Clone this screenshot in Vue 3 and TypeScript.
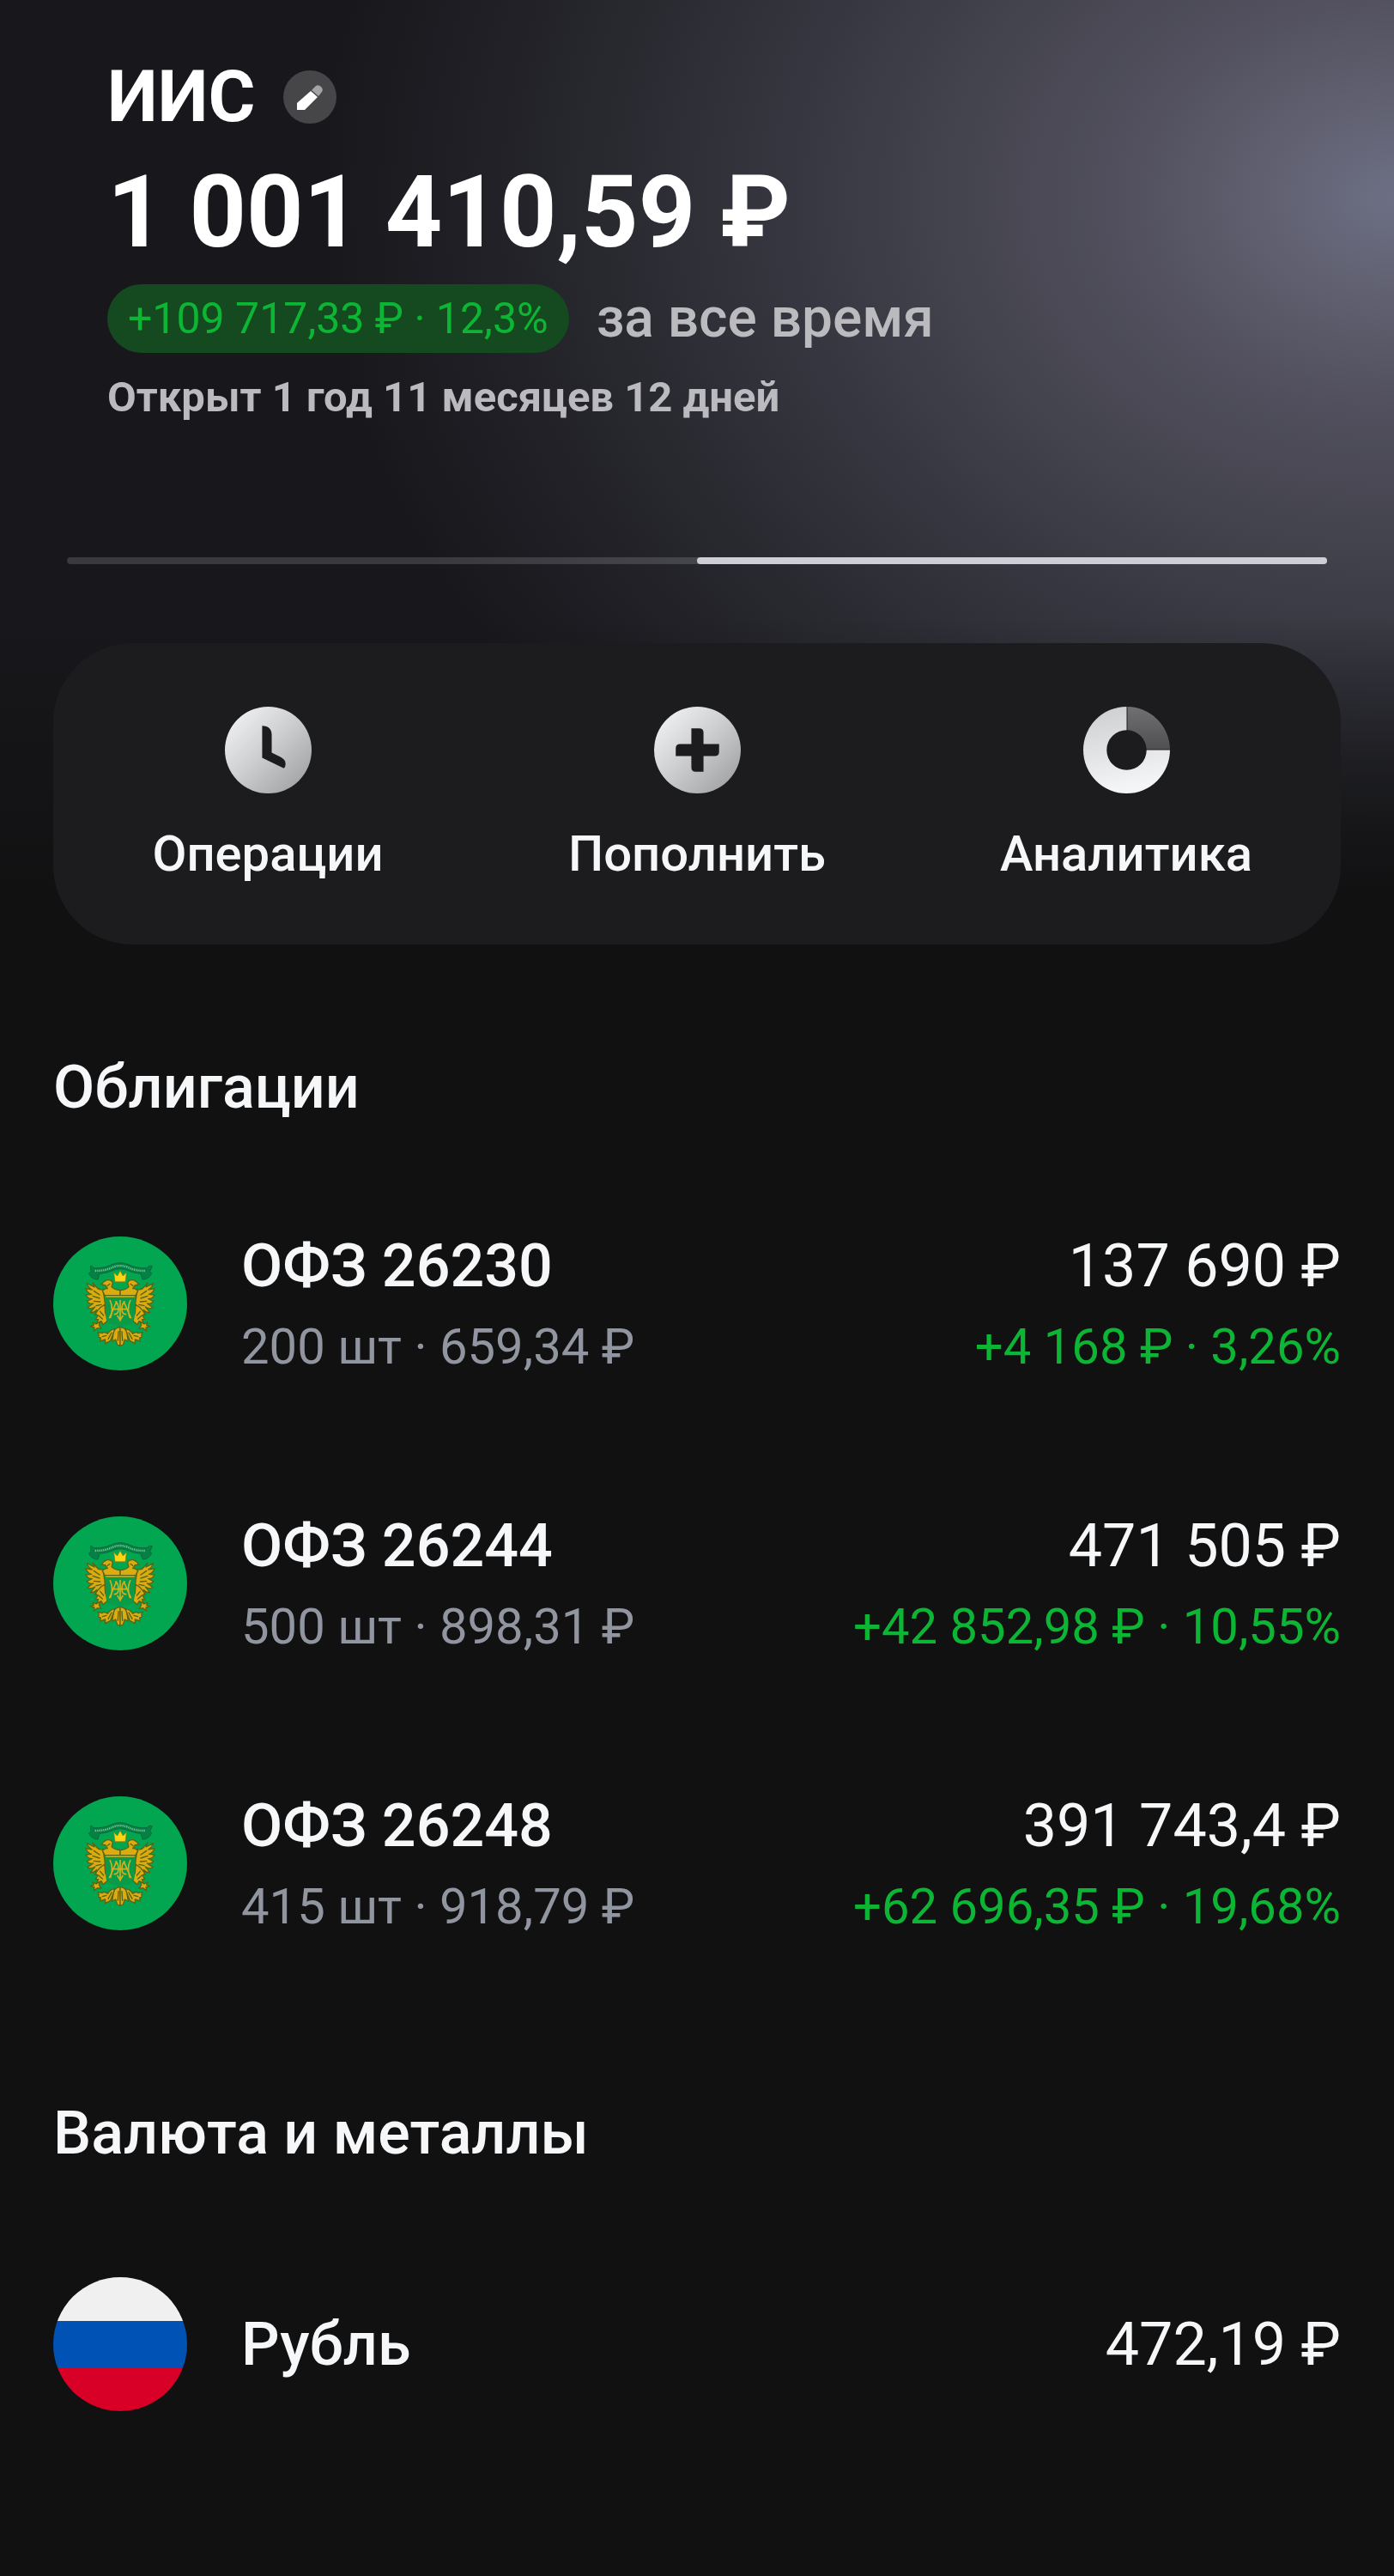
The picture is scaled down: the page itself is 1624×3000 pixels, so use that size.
<script setup lang="ts">
interface Holding {
  id: string
  name: string
  icon: 'emblem' | 'flag'
  amount: string
  details?: string
  profit?: string
}

interface Section {
  title: string
  items: Holding[]
}

const actions = [
  { id: 'history', label: 'Операции' },
  { id: 'deposit', label: 'Пополнить' },
  { id: 'analytics', label: 'Аналитика' },
]

const sections: Section[] = [
  {
    title: 'Облигации',
    items: [
      { id: '26230', name: 'ОФЗ 26230', icon: 'emblem', details: '200 шт · 659,34 ₽', amount: '137 690 ₽', profit: '+4 168 ₽ · 3,26%' },
      { id: '26244', name: 'ОФЗ 26244', icon: 'emblem', details: '500 шт · 898,31 ₽', amount: '471 505 ₽', profit: '+42 852,98 ₽ · 10,55%' },
      { id: '26248', name: 'ОФЗ 26248', icon: 'emblem', details: '415 шт · 918,79 ₽', amount: '391 743,4 ₽', profit: '+62 696,35 ₽ · 19,68%' },
    ],
  },
  {
    title: 'Валюта и металлы',
    items: [{ id: 'rub', name: 'Рубль', icon: 'flag', amount: '472,19 ₽' }],
  },
]
</script>

<template>
  <main class="page">
    <svg class="defs" aria-hidden="true" width="0" height="0">
      <defs>
        <linearGradient id="silver" x1="0.1" y1="0.1" x2="0.9" y2="0.9">
          <stop offset="0" stop-color="#eeeff1" />
          <stop offset="0.5" stop-color="#cbccce" />
          <stop offset="1" stop-color="#a3a3a5" />
        </linearGradient>
        <linearGradient id="ring" x1="0" y1="0" x2="0.2" y2="1">
          <stop offset="0" stop-color="#cbcdce" />
          <stop offset="1" stop-color="#f4f5f6" />
        </linearGradient>
        <linearGradient id="sector" x1="0" y1="0" x2="0" y2="1">
          <stop offset="0" stop-color="#707072" />
          <stop offset="1" stop-color="#505052" />
        </linearGradient>
        <!-- left half of the eagle; the right half is its mirror -->
        <g id="eagle-half">
          <g fill="#dcab10" stroke="#5c6414" stroke-width="4" stroke-linejoin="round">
            <path d="M180 226 L174 184 Q160 190 150 176 L138 162 L144 177 L118 164 Q122 178 136 186 L114 182 Q120 198 134 202 L114 204 Q120 218 136 218 L118 226 Q126 238 140 234 L120 248 Q130 256 146 246 L130 266 Q142 268 152 256 L146 274 Q160 270 164 254 L182 252Z" />
            <path d="M234 206 L180 206 L172 190 Q180 180 190 182 L182 170 L168 168 Q176 156 188 152 Q204 150 208 162 L204 176 Q212 186 234 188Z" />
            <path d="M180 238 Q160 248 148 270 L156 276 L148 290 L158 290 L152 304 L168 296 L174 308 L188 296 Q190 280 182 268Z" />
            <path d="M164 298 L150 306 L138 300 L142 310 L130 314 L144 318 L142 330 L154 320 L168 322 L160 310Z" />
            <path d="M234 316 Q220 318 212 328 L206 366 L218 360 L224 378 L234 382Z" />
            <path d="M216 322 Q198 326 190 340 Q180 330 170 338 L156 334 L160 344 Q154 352 166 354 L164 366 L182 360 L182 374 L200 364 Q208 346 216 322Z" />
          </g>
          <g fill="none" stroke="#4f6418" stroke-width="4" stroke-linecap="round">
            <path d="M142 190 L162 204 M138 208 L162 216 M142 226 L164 228 M150 242 L168 238" />
            <path d="M164 262 L176 276 M158 276 L172 288 M190 172 L198 166" />
            <path d="M228 332 L226 364 M204 336 L192 358 M186 346 L172 350" />
          </g>
        </g>
      </defs>
    </svg>

    <header class="hero">
      <div class="summary">
        <div class="title-row">
          <h1 class="title">ИИС</h1>
          <button class="edit" type="button" aria-label="Изменить название">
            <svg viewBox="0 0 62 62" aria-hidden="true">
              <path d="M16 46 V38 L32 24 L40 31 L25 46Z" fill="#fff" />
              <path d="M33 23 L38 18 Q41 16 44 19 Q47 22 45 25 L41 30Z" fill="#a4a4a6" />
            </svg>
          </button>
        </div>
        <p class="balance">1 001 410,59 ₽</p>
        <div class="profit-row">
          <span class="chip">+109 717,33 ₽ · 12,3%</span>
          <span class="period">за все время</span>
        </div>
        <p class="opened">Открыт 1 год 11 месяцев 12 дней</p>
      </div>
      <div class="pager" aria-hidden="true"><span class="thumb"></span></div>
    </header>

    <nav class="actions" aria-label="Действия со счётом">
      <button v-for="a in actions" :key="a.id" class="action" type="button">
        <svg class="action-icon" viewBox="0 0 100 100" aria-hidden="true">
          <template v-if="a.id === 'history'">
            <circle cx="50" cy="50" r="50" fill="url(#silver)" />
            <path d="M43 22 C50 22 54 26 54 32 V53 L64 58 Q70 61 70 66 Q70 69 68 71 L43 59Z" fill="#1c1c1e" />
          </template>
          <template v-else-if="a.id === 'deposit'">
            <circle cx="50" cy="50" r="50" fill="url(#silver)" />
            <path d="M43 25 H52 Q57 25 57 30 V43 H75 V52 Q75 57 70 57 H57 V75 H48 Q43 75 43 70 V57 H25 V48 Q25 43 30 43 H43Z" fill="#1c1c1e" />
          </template>
          <template v-else>
            <path d="M50 0 A50 50 0 1 0 100 50 H73 A23 23 0 1 1 50 27Z" fill="url(#ring)" />
            <path d="M51 0 A50 50 0 0 1 100 49 H73 A23 23 0 0 0 51 27Z" fill="url(#sector)" />
          </template>
        </svg>
        <span>{{ a.label }}</span>
      </button>
    </nav>

    <section v-for="s in sections" :key="s.title" class="section">
      <h2 class="section-title">{{ s.title }}</h2>
      <ul class="list">
        <li v-for="h in s.items" :key="h.id" class="row">
          <svg v-if="h.icon === 'emblem'" class="avatar" viewBox="0 0 468 468" aria-hidden="true">
            <circle cx="234" cy="234" r="234" fill="#03a650" />
            <path d="M130 104 Q134 98 140 110 Q176 112 200 100 Q234 84 268 100 Q292 112 328 110 Q334 98 346 104 L338 122 L344 130 Q330 152 312 150 L306 130 Q280 128 264 120 Q234 106 204 120 Q188 128 162 130 L156 150 Q138 152 124 130 L132 122Z" fill="#078045" stroke="#056b3c" stroke-width="3" />
            <path d="M146 120 Q184 120 206 108 Q234 96 262 108 Q284 120 322 120" fill="none" stroke="#6fc48d" stroke-width="7" stroke-dasharray="4 3" />
            <use href="#eagle-half" />
            <use href="#eagle-half" transform="translate(468 0) scale(-1 1)" />
            <path d="M212 126 L224 138 L234 120 L244 138 L256 126 L252 158 H216Z" fill="#fbd414" stroke="#8c7d10" stroke-width="2" />
            <path d="M184 208 H284 V282 Q282 304 262 308 Q244 308 234 318 Q224 308 206 308 Q186 304 184 282Z" fill="#0a9a48" />
            <path d="M184 210 H284" stroke="#d9b010" stroke-width="4" />
            <path d="M198 222 Q212 250 200 284 M222 226 L196 286 M216 228 Q228 230 228 254 Q228 272 212 272 M270 222 Q256 250 268 284 M246 226 L272 286 M252 228 Q240 230 240 254 Q240 272 256 272 M234 222 V296 M204 254 H264 M224 276 L234 292 L244 276" fill="none" stroke="#c9b324" stroke-width="5" />
          </svg>
          <svg v-else class="avatar flag" viewBox="0 0 156 156" aria-hidden="true">
            <rect width="156" height="51" fill="#f0f0f0" />
            <rect y="51" width="156" height="55" fill="#0052b4" />
            <rect y="106" width="156" height="50" fill="#d80027" />
          </svg>
          <div class="col">
            <span class="name">{{ h.name }}</span>
            <span v-if="h.details" class="details">{{ h.details }}</span>
          </div>
          <div class="col end">
            <span class="amount">{{ h.amount }}</span>
            <span v-if="h.profit" class="details profit">{{ h.profit }}</span>
          </div>
        </li>
      </ul>
    </section>
  </main>
</template>

<style>
body {
  margin: 0;
  background: #111112;
}
</style>

<style scoped>
.page {
  box-sizing: border-box;
  min-height: 100vh;
  padding: 63px 62px 100px;
  color: #f6f7f8;
  font-family: Roboto, "Noto Sans", sans-serif;
  background:
    linear-gradient(to bottom, transparent 720px, #111112 1040px),
    radial-gradient(1250px 960px at 100% 230px,
      #6d6f84 0%, #606070 12%, #514f5d 26%, #43434d 42%, #35353f 58%, #2a2b31 72%, #1f1f25 87%, #18181c 100%);
}

.defs {
  position: absolute;
}

h1, h2, p, ul {
  margin: 0;
  padding: 0;
}

button {
  padding: 0;
  border: 0;
  font: inherit;
  color: inherit;
  cursor: pointer;
}

.summary {
  padding-left: 63px;
}

.title-row {
  display: flex;
  align-items: center;
  gap: 32px;
}

.title {
  font-size: 84px;
  line-height: 100px;
  font-weight: 700;
  color: #fff;
}

.edit {
  width: 62px;
  height: 62px;
  border-radius: 50%;
  background: #464649;
}

.edit svg {
  display: block;
}

.balance {
  margin-top: 14px;
  font-size: 116px;
  line-height: 140px;
  font-weight: 700;
  color: #fff;
}

.profit-row {
  display: flex;
  align-items: center;
  gap: 32px;
  margin-top: 14px;
}

.chip {
  padding: 0 24px;
  border-radius: 40px;
  background: #154a20;
  color: #0db534;
  font-size: 50px;
  line-height: 80px;
}

.period {
  color: #bababf;
  font-size: 64px;
  line-height: 80px;
  font-weight: 500;
}

.opened {
  margin-top: 24px;
  color: #bababf;
  font-size: 49px;
  line-height: 56px;
  font-weight: 700;
}

.pager {
  display: flex;
  justify-content: flex-end;
  margin: 158px 16px 0;
  border-radius: 4px;
  background: rgba(255, 255, 255, 0.15);
}

.thumb {
  width: 50%;
  height: 8px;
  border-radius: 4px;
  background: #cfced6;
}

.actions {
  display: grid;
  grid-template-columns: repeat(3, 1fr);
  margin-top: 92px;
  padding: 74px 0 70px;
  border-radius: 92px;
  background: #1c1c1e;
}

.action {
  display: flex;
  flex-direction: column;
  align-items: center;
  gap: 34px;
  background: none;
  font-size: 58px;
  line-height: 72px;
  font-weight: 500;
}

.action-icon {
  width: 101px;
  height: 101px;
}

.section {
  margin-top: 124px;
}

.section + .section {
  margin-top: 180px;
}

.section-title {
  font-size: 70px;
  line-height: 84px;
  font-weight: 500;
}

.list {
  display: flex;
  flex-direction: column;
  gap: 142px;
  margin-top: 118px;
  list-style: none;
}

.row {
  display: flex;
  align-items: center;
  min-height: 172px;
}

.avatar {
  flex: none;
  width: 156px;
  height: 156px;
  margin-right: 63px;
}

.flag {
  border-radius: 50%;
}

.col {
  display: flex;
  flex-direction: column;
  gap: 4px;
}

.end {
  flex: 1;
  align-items: flex-end;
}

.name,
.amount {
  font-size: 70px;
  line-height: 96px;
}

.name {
  font-weight: 500;
}

.details {
  color: #9095a0;
  font-size: 58px;
  line-height: 84px;
}

.profit {
  color: #0db534;
}
</style>
